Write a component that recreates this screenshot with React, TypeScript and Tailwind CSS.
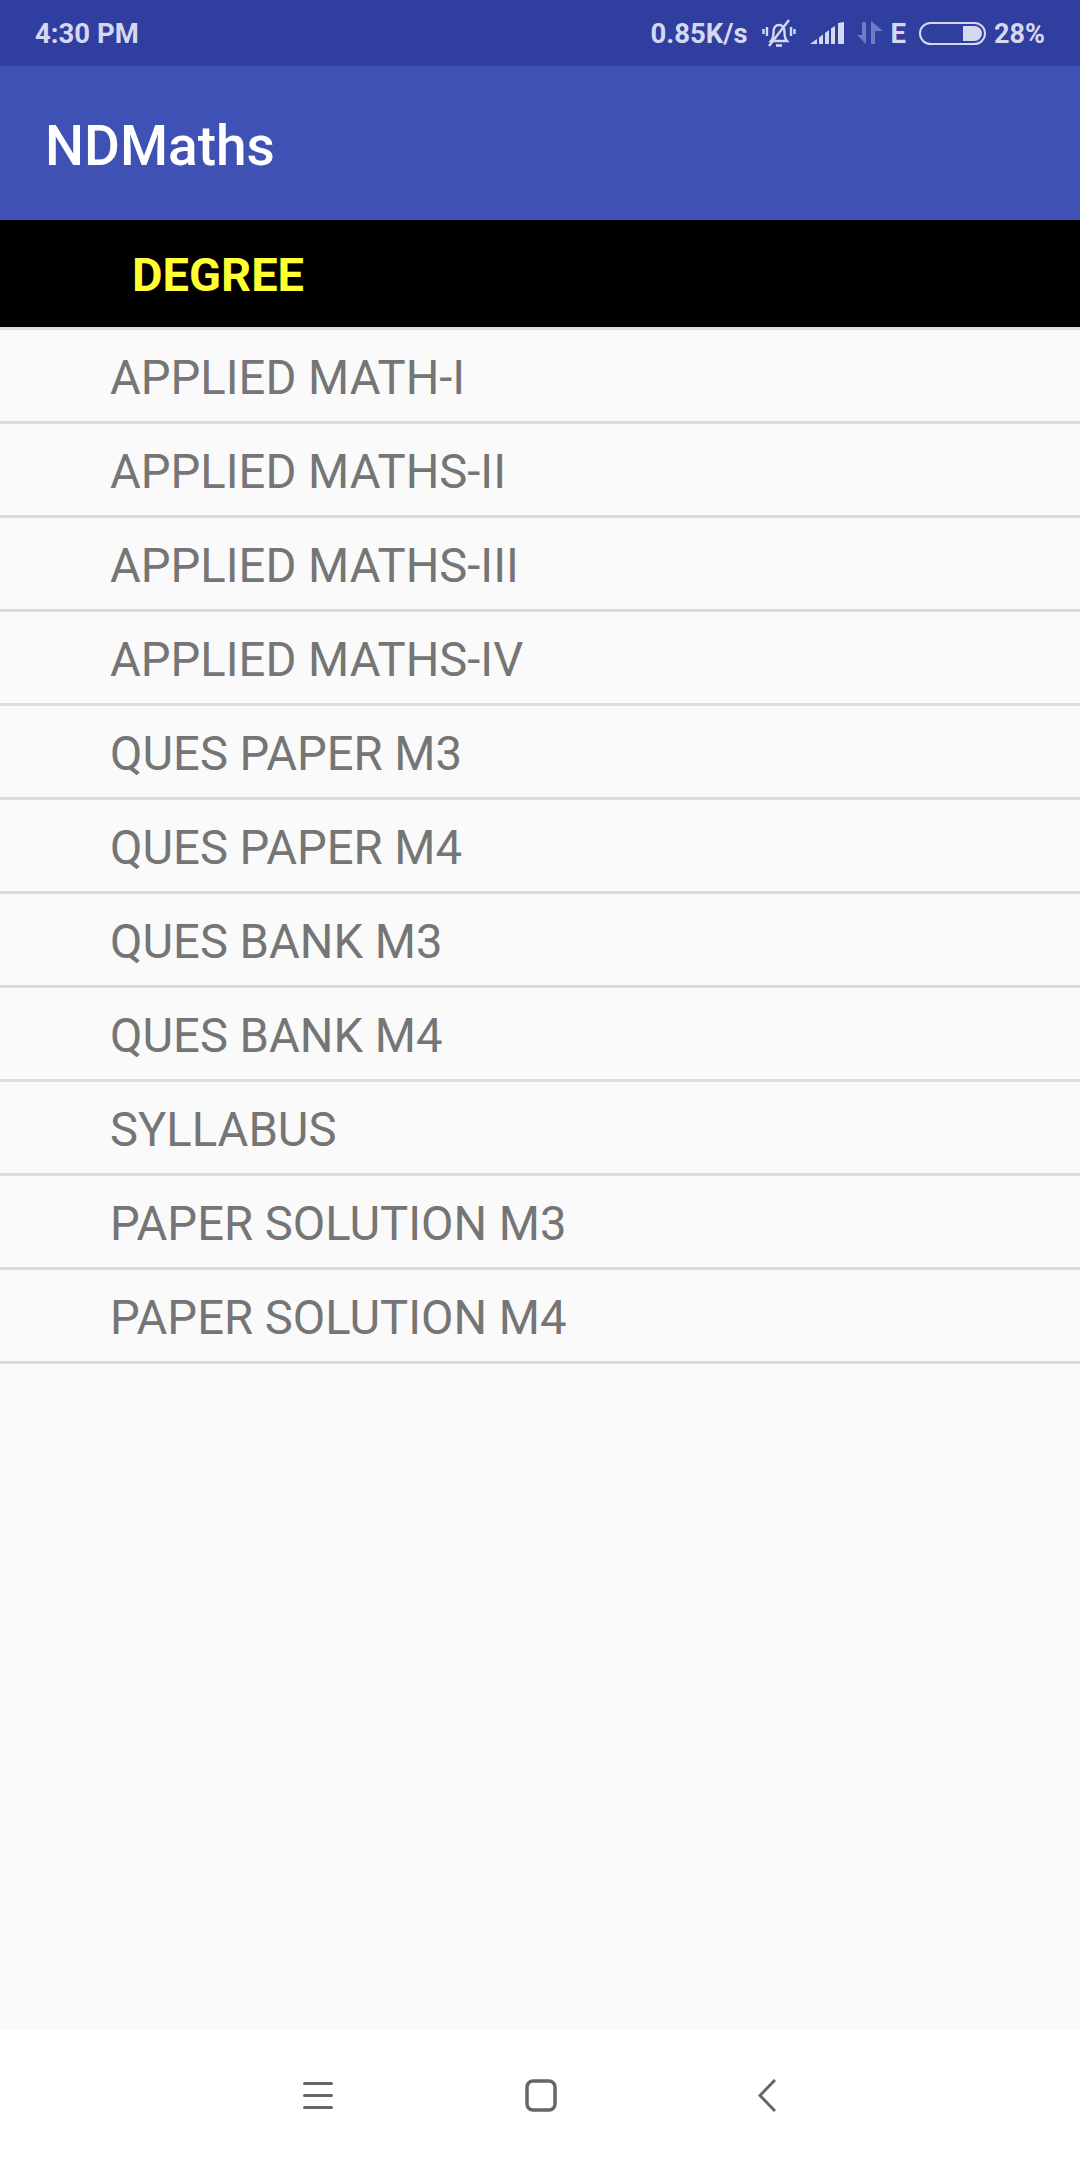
const rows = [
  'APPLIED MATH-I',
  'APPLIED MATHS-II',
  'APPLIED MATHS-III',
  'APPLIED MATHS-IV',
  'QUES PAPER M3',
  'QUES PAPER M4',
  'QUES BANK M3',
  'QUES BANK M4',
  'SYLLABUS',
  'PAPER SOLUTION M3',
  'PAPER SOLUTION M4',
];

function MuteBell() {
  return (
    <svg width="34" height="29" viewBox="0 0 34 29" fill="none" stroke="#d5d9f0" strokeWidth="2.4">
      <path d="M9 22c2-2 2.500-4 2.500-9 0-4 2-7 5.500-7s5.500 3 5.500 7c0 5 .5 7 2.500 9z" />
      <path d="M14 26.500h6" strokeWidth="2.600" />
      <path d="M7 27 27 1" />
      <path d="M5 8v9M1.500 10v5M29 8v9M32.500 10v5" />
    </svg>
  );
}

function Signal() {
  return (
    <svg width="34" height="22" viewBox="0 0 34 22" fill="#d5d9f0">
      <path d="M0 22 7 17v5zM9 15.500l4-3V22H9zM15 11l4-3v14h-4zM21 6.500l4-2.500v18h-4zM28 1l6-1v22h-6z" />
    </svg>
  );
}

function DataArrows() {
  return (
    <svg width="26" height="24" viewBox="0 0 26 24" fill="#6f7cc4">
      <path d="M5 1h4v22L0 14h5zM14 23V0l12 10h-8v13z" />
    </svg>
  );
}

function Battery() {
  return (
    <div className="flex h-[23px] w-[67px] items-center justify-end rounded-full border-2 border-[#d5d9f0] pr-[2px]">
      <div className="h-[15px] w-[19px] rounded-r-full bg-[#d5d9f0]" />
    </div>
  );
}

export default function App() {
  return (
    <div
      className="flex h-[2160px] w-[1080px] flex-col overflow-hidden bg-[#fafafa]"
      style={{ fontFamily: 'Roboto, sans-serif' }}
    >
      {/* Status bar */}
      <div className="flex h-[66px] items-center justify-between bg-[#303f9f] pl-[35px] pr-[35px] text-[27.500px] font-bold text-[#d5d9f0]">
        <span className="pt-[2px]">4:30 PM</span>
        <div className="flex items-center">
          <span className="pt-[2px]">0.85K/s</span>
          <span className="ml-[14px] flex"><MuteBell /></span>
          <span className="ml-[14px] flex"><Signal /></span>
          <span className="ml-[13px] flex"><DataArrows /></span>
          <span className="ml-[8px] pt-[2px]">E</span>
          <span className="ml-[13px]"><Battery /></span>
          <span className="ml-[8px] pt-[2px] text-[27px]">28%</span>
        </div>
      </div>

      {/* App bar */}
      <div className="flex h-[154px] items-center bg-[#3f51b5] pl-[45px] pt-[6px] text-[55px] font-medium text-white">
        NDMaths
      </div>

      {/* Header */}
      <div className="flex h-[107px] items-center bg-black pl-[132px] pt-[4px] text-[47px] font-bold text-[#ffff33]">
        DEGREE
      </div>

      {/* List */}
      <div className="border-t-[3px] border-[#e0e0e0]">
        {rows.map((row) => (
          <div
            key={row}
            className="flex h-[94px] items-center border-b-[3px] border-[#dcdcdc] pl-[110px] pt-[6px] text-[47.200px] text-[#757575]"
          >
            {row}
          </div>
        ))}
      </div>

      <div className="flex-1" />

      {/* Nav bar */}
      <div className="flex h-[130px] items-start bg-white">
        <svg className="ml-[303px] mt-[51px]" width="30" height="28" viewBox="0 0 30 28" fill="none" stroke="#666" strokeWidth="3" strokeLinecap="round">
          <path d="M1.500 2.500h27M1.500 14.500h27M1.500 26.500h27" />
        </svg>
        <svg className="ml-[192px] mt-[49px]" width="32" height="33" viewBox="0 0 32 33" fill="none" stroke="#666" strokeWidth="3.500">
          <rect x="2" y="2" width="28" height="29" rx="6" />
        </svg>
        <svg className="ml-[201px] mt-[49px]" width="18" height="33" viewBox="0 0 18 33" fill="none" stroke="#666" strokeWidth="3">
          <path d="M17 1 2 16.500 17 32" />
        </svg>
      </div>
    </div>
  );
}
